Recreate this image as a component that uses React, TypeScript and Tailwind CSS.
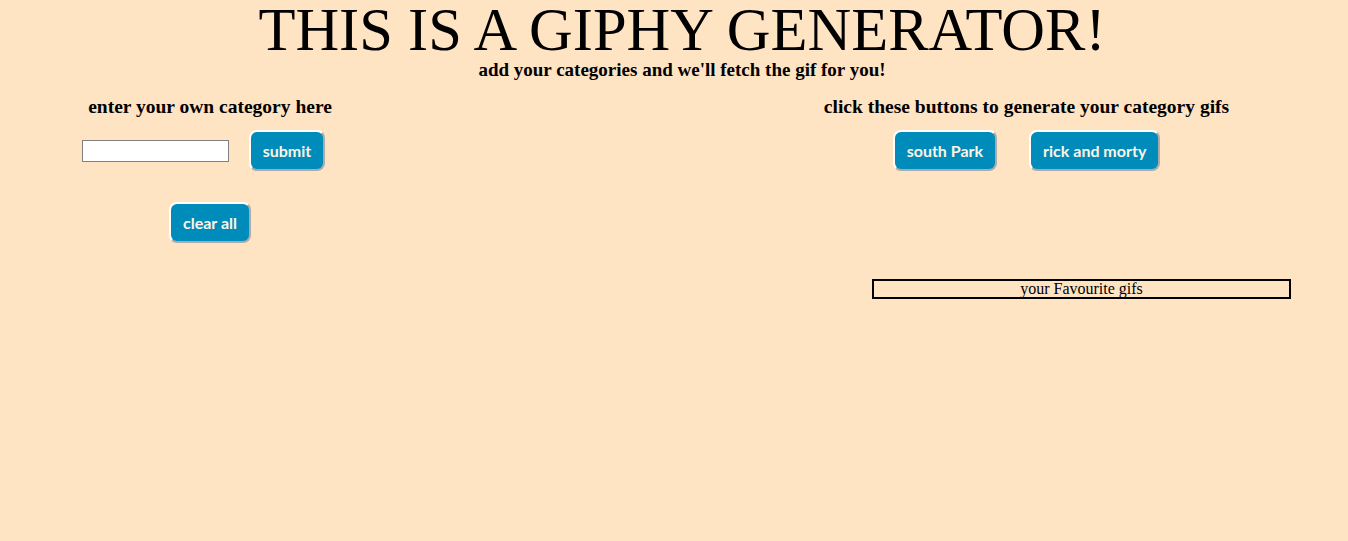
const serif = "font-['Liberation_Serif','Times_New_Roman',serif]";

function GifButton({ label }: { label: string }) {
  return (
    <button className="h-[41px] px-[12px] rounded-[8px] bg-[#008cba] text-[#fdf5e6] font-['Lato',sans-serif] font-bold text-[16px] border-2 border-white [border-style:outset]">
      {label}
    </button>
  );
}

export default function App() {
  return (
    <div className={`min-h-[541px] bg-[#ffe4c4] text-black ${serif}`}>
      <h1 className="text-center text-[60.5px] leading-[58px] pt-[1px] pl-[16px]">THIS IS A GIPHY GENERATOR!</h1>
      <p className="text-center font-bold text-[19px] leading-[22px] pl-[16px]">
        add your categories and we'll fetch the gif for you!
      </p>

      <div className="flex mt-[15px]">
        <div className="w-[420px] flex flex-col items-center">
          <h3 className="font-bold text-[19.5px] leading-[22px]">enter your own category here</h3>
          <div className="flex items-center gap-[20px] mt-[12px] mr-[13px]">
            <input type="text" className="w-[147px] h-[22px] bg-white border border-[#808080]" />
            <GifButton label="submit" />
          </div>
          <div className="mt-[31px]">
            <GifButton label="clear all" />
          </div>
        </div>

        <div className="ml-auto w-[643px] flex flex-col items-center">
          <h3 className="font-bold text-[19.5px] leading-[22px]">click these buttons to generate your category gifs</h3>
          <div className="flex gap-[32px] mt-[12px]">
            <GifButton label="south Park" />
            <GifButton label="rick and morty" />
          </div>
          <div className="self-start ml-[167px] mt-[108px] w-[419px] h-[20px] border-2 border-black text-center text-[16px] leading-[16px]">
            your Favourite gifs
          </div>
        </div>
      </div>
    </div>
  );
}
